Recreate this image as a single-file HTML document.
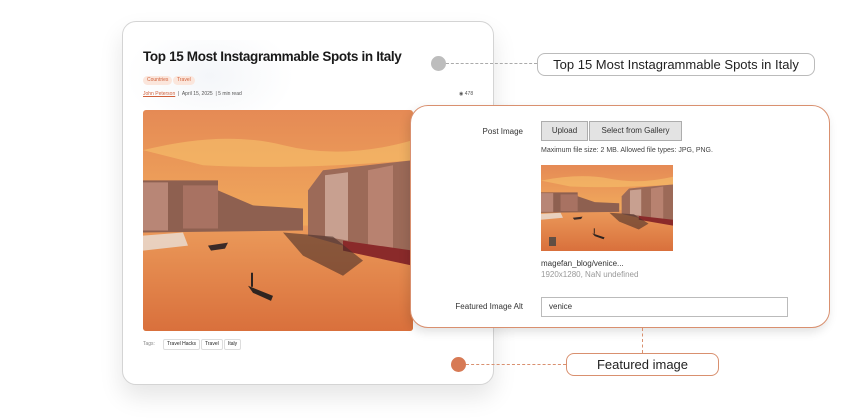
<!DOCTYPE html>
<html><head><meta charset="utf-8"><style>
*{margin:0;padding:0;box-sizing:border-box}
body{width:850px;height:420px;background:#fff;position:relative;overflow:hidden;font-family:"Liberation Sans",sans-serif}
.abs{position:absolute}
.card{left:122px;top:21px;width:372px;height:364px;border:1px solid #d4d4d4;border-radius:14px;background:#fff;box-shadow:0 12px 24px rgba(0,0,0,.10)}
.title{left:143px;top:49px;font-size:13.5px;font-weight:bold;color:#1a1a1a;letter-spacing:-.35px}
.tag{top:76px;height:9px;font-size:5px;color:#d0603a;background:#fbe6dc;border-radius:5px;padding:1px 4px;line-height:7px}
.meta{left:143px;top:91px;font-size:5px;color:#555}
.meta u{color:#d0603a}
.tg{top:339px;height:11px;font-size:5px;border:1px solid #ddd;border-radius:2px;padding:0 3px;line-height:9px;color:#222}
.lbl{border-radius:8px;background:#fff;font-size:13px;color:#222;text-align:center}
.panel{left:410px;top:105px;width:420px;height:223px;border:1px solid #d9906f;border-radius:18px;background:#fff;box-shadow:-2px 4px 10px rgba(0,0,0,.12)}
.pl{font-size:8px;color:#333;text-align:right;width:100px}
.btn{top:121px;height:20px;background:#e3e3e3;border:1px solid #adadad;font-size:8px;color:#333;text-align:center;line-height:18px}
</style></head><body>
<svg width="0" height="0" style="position:absolute"><defs>
<linearGradient id="sky" x1="0" y1="0" x2="0" y2="1"><stop offset="0" stop-color="#e58a55"/><stop offset=".5" stop-color="#f0a85c"/><stop offset="1" stop-color="#f7c766"/></linearGradient>
<linearGradient id="wat" x1="0" y1="0" x2="0" y2="1"><stop offset="0" stop-color="#eb9a5a"/><stop offset="1" stop-color="#d9703c"/></linearGradient>
<symbol id="ven" viewBox="0 0 270 220" preserveAspectRatio="none">
<rect width="270" height="220" fill="url(#sky)"/>
<path d="M0 40 Q80 20 140 35 T270 30 L270 50 Q150 60 60 55 Z" fill="#f6c26a" opacity=".6"/>
<rect y="115" width="270" height="105" fill="url(#wat)"/>
<path d="M0 70 L75 70 L75 80 L110 95 L160 98 L160 120 L0 122 Z" fill="#8e6050"/>
<path d="M0 72 L25 72 L25 120 L0 120 Z" fill="#b88676"/>
<path d="M40 75 L75 75 L75 118 L40 118 Z" fill="#a87262"/>
<path d="M165 80 L180 60 L270 50 L270 150 L240 145 L200 135 L165 125 Z" fill="#9c6a58"/>
<path d="M182 65 L205 62 L205 130 L182 126 Z" fill="#c8a090"/>
<path d="M225 60 L250 55 L250 140 L225 138 Z" fill="#b88270"/>
<path d="M200 130 L270 140 L270 155 L200 140 Z" fill="#8a2a2a"/>
<path d="M140 122 L190 126 L220 150 L200 165 L160 145 Z" fill="#4a2e2a" opacity=".6"/>
<path d="M0 125 L40 122 L45 135 L0 140 Z" fill="#e8e0d8" opacity=".8"/>
<path d="M65 135 L85 132 L82 138 L68 140Z" fill="#3a2a28"/>
<path d="M105 175 L130 185 L128 190 L110 182Z" fill="#2e2420"/>
<rect x="108" y="162" width="2" height="14" fill="#2e2420"/>
</symbol></defs></svg>

<div class="abs card"></div>
<div class="abs" style="left:125px;top:40px;width:170px;height:90px;background:radial-gradient(ellipse at 50% 40%,#f4f6f9,rgba(255,255,255,0) 70%)"></div>
<div class="abs title">Top 15 Most Instagrammable Spots in Italy</div>
<div class="abs tag" style="left:143px">Countries</div>
<div class="abs tag" style="left:173px">Travel</div>
<div class="abs meta"><u>John Peterson</u> &nbsp;|&nbsp; April 15, 2025 &nbsp;| 5 min read</div>
<div class="abs meta" style="left:459px">&#9673; 478</div>
<svg class="abs" style="left:143px;top:110px;border-radius:3px" width="270" height="221"><use href="#ven" width="270" height="221"/></svg>
<div class="abs" style="left:143px;top:341px;font-size:5px;color:#888">Tags:</div>
<div class="abs tg" style="left:163px">Travel Hacks</div>
<div class="abs tg" style="left:201px">Travel</div>
<div class="abs tg" style="left:224px">Italy</div>

<div class="abs" style="left:431px;top:56px;width:15px;height:15px;border-radius:50%;background:#bdbdbd"></div>
<div class="abs" style="left:446px;top:63px;width:91px;border-top:1px dashed #aaa"></div>
<div class="abs lbl" style="left:537px;top:53px;width:278px;height:23px;border:1px solid #bbb;line-height:21px">Top 15 Most Instagrammable Spots in Italy</div>

<div class="abs panel"></div>
<div class="abs pl" style="left:423px;top:127px">Post Image</div>
<div class="abs btn" style="left:541px;width:47px">Upload</div>
<div class="abs btn" style="left:589px;width:93px">Select from Gallery</div>
<div class="abs" style="left:541px;top:147px;font-size:7px;color:#444">Maximum file size: 2 MB. Allowed file types: JPG, PNG.</div>
<svg class="abs" style="left:541px;top:165px" width="132" height="86"><use href="#ven" width="132" height="86"/><rect x="8" y="72" width="7" height="9" fill="#444" opacity=".8"/></svg>
<div class="abs" style="left:541px;top:259px;font-size:8px;color:#333">magefan_blog/venice...</div>
<div class="abs" style="left:541px;top:270px;font-size:8px;color:#999">1920x1280, NaN undefined</div>
<div class="abs pl" style="left:423px;top:302px">Featured Image Alt</div>
<div class="abs" style="left:541px;top:297px;width:247px;height:20px;border:1px solid #bbb;font-size:8px;color:#333;padding-left:7px;line-height:18px">venice</div>

<div class="abs" style="left:642px;top:328px;height:25px;border-left:1px dashed #d9906f"></div>
<div class="abs" style="left:451px;top:357px;width:15px;height:15px;border-radius:50%;background:#d77a55"></div>
<div class="abs" style="left:466px;top:364px;width:100px;border-top:1px dashed #d9906f"></div>
<div class="abs lbl" style="left:566px;top:353px;width:153px;height:23px;border:1px solid #d9906f;line-height:21px">Featured image</div>
</body></html>
